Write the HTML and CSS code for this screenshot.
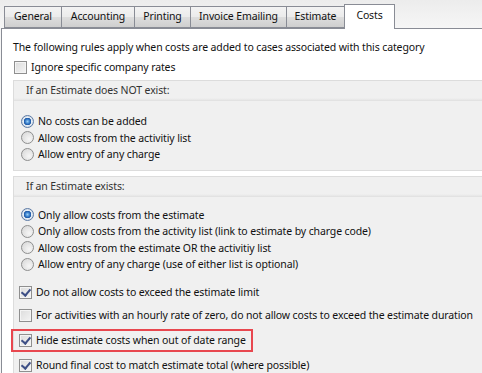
FILE: index.html
```html
<!DOCTYPE html>
<html lang="en">
<head>
    <meta charset="UTF-8">
    <meta name="viewport" content="width=device-width, initial-scale=1.0">
    <title>Category - Costs</title>
    <link rel="stylesheet" href="styles.css">
</head>
<body>
    <div class="tabs">
        <div class="tab tab-general">General</div>
        <div class="tab tab-accounting">Accounting</div>
        <div class="tab tab-printing">Printing</div>
        <div class="tab tab-invoice">Invoice Emailing</div>
        <div class="tab tab-estimate">Estimate</div>
        <div class="tab tab-costs active">Costs</div>
    </div>
    <div class="panel">
        <p class="intro">The following rules apply when costs are added to cases associated with this category</p>
        <label class="check check-top"><span class="box"></span>Ignore specific company rates</label>

        <div class="group">
            <div class="group-head">If an Estimate does NOT exist:</div>
            <div class="group-body">
                <label class="radio"><span class="dot on"></span>No costs can be added</label>
                <label class="radio"><span class="dot"></span>Allow costs from the activitiy list</label>
                <label class="radio"><span class="dot"></span>Allow entry of any charge</label>
            </div>
        </div>

        <div class="group group-last">
            <div class="group-head">If an Estimate exists:</div>
            <div class="group-body">
                <label class="radio"><span class="dot on"></span>Only allow costs from the estimate</label>
                <label class="radio"><span class="dot"></span>Only allow costs from the activity list (link to estimate by charge code)</label>
                <label class="radio"><span class="dot"></span>Allow costs from the estimate OR the activitiy list</label>
                <label class="radio"><span class="dot"></span>Allow entry of any charge (use of either list is optional)</label>
            </div>
            <div class="options">
                <label class="check"><span class="box checked"></span>Do not allow costs to exceed the estimate limit</label>
                <label class="check"><span class="box"></span>For activities with an hourly rate of zero, do not allow costs to exceed the estimate duration</label>
                <label class="check highlight"><span class="box checked"></span>Hide estimate costs when out of date range</label>
                <label class="check"><span class="box checked"></span>Round final cost to match estimate total (where possible)</label>
            </div>
        </div>
    </div>
</body>
</html>
```

FILE: styles.css
```css
*{
    padding: 0;
    margin: 0;
    box-sizing: border-box;
}
body{
    width: 482px;
    height: 373px;
    overflow: hidden;
    background: linear-gradient(#ececec, #f6f6f6 28px);
    font-family: "Noto Sans", "Open Sans", sans-serif;
    font-size: 10.5px;
    letter-spacing: -0.12px;
    color: #111;
}

/* tab strip */
.tabs{
    display: flex;
    align-items: flex-end;
    height: 29px;
    padding-left: 4px;
    position: relative;
    z-index: 1;
}
.tab{
    height: 22px;
    line-height: 19px;
    text-align: center;
    border: 1px solid #898c95;
    border-right: none;
    margin-bottom: 1px;
    background: linear-gradient(#f3f3f3, #ebebeb 50%, #dddddd 51%, #cfcfcf);
    color: #111;
}
.tab-general{ width: 57px; }
.tab-accounting{ width: 73px; }
.tab-printing{ width: 56px; }
.tab-invoice{ width: 96px; }
.tab-estimate{ width: 58px; }
.tab.active{
    width: 51px;
    height: 25px;
    line-height: 21px;
    margin-bottom: 0;
    border-right: 1px solid #898c95;
    border-bottom: none;
    background: #fff;
}

/* page body */
.panel{
    margin-top: -1px;
    margin-left: 1px;
    width: 600px;
    height: 400px;
    overflow: hidden;
    background: #fff;
    border: 1px solid #898c95;
    padding: 11px 0 0 11px;
}
.intro{
    line-height: 14px;
}
.check, .radio{
    display: flex;
    align-items: center;
    white-space: nowrap;
}
.check-top{
    margin: 6px 0 0 1px;
    height: 14px;
}

/* checkbox */
.box{
    width: 13px;
    height: 13px;
    margin-right: 4px;
    border: 1px solid #8f8f8f;
    background: linear-gradient(135deg, #dcdcdc, #f4f4f4);
    box-shadow: inset 0 0 0 1px #f4f4f4;
    flex-shrink: 0;
    position: relative;
}
.box.checked::after{
    content: "";
    position: absolute;
    left: 3px;
    top: 0px;
    width: 4px;
    height: 7px;
    border: solid #3d4f86;
    border-width: 0 2px 2px 0;
    transform: rotate(40deg);
}

/* radio */
.dot{
    width: 13px;
    height: 13px;
    margin-right: 4px;
    border-radius: 50%;
    border: 1px solid #8e8f8f;
    background: radial-gradient(circle at 65% 65%, #f6f6f6, #d4d4d4);
    flex-shrink: 0;
}
.dot.on{
    border-color: #5c7aa5;
    background: radial-gradient(circle at 50% 50%, #9ad0f5 0, #2d73c4 2.5px, #1f56a0 3.5px, #e6eef6 4px, #cfd7e0 6px);
}

/* grouped sections */
.group{
    margin-top: 6px;
    background: #f0f0f0;
    border: 1px solid #dcdcdc;
    border-right: none;
}
.group + .group{
    margin-top: 5px;
}
.group-head{
    height: 20px;
    line-height: 19px;
    padding-left: 12px;
    color: #333;
    background: linear-gradient(#f0f0f0 17px, #e6e6e6);
    border-bottom: 1px solid #e2e2e2;
}
.group-body{
    padding: 12px 0 7px 7px;
}
.radio{
    height: 16.5px;
}
.group-last .group-body{
    padding-top: 10px;
    padding-bottom: 8px;
}
.options{
    padding-left: 5px;
}
.options .check{
    height: 23.3px;
}
.highlight{
    width: max-content;
    height: 20px;
    margin: 1.6px 0 1.7px -8px;
    padding: 0 5px 0 6px;
    border: 2px solid #e8474f;
}
```
